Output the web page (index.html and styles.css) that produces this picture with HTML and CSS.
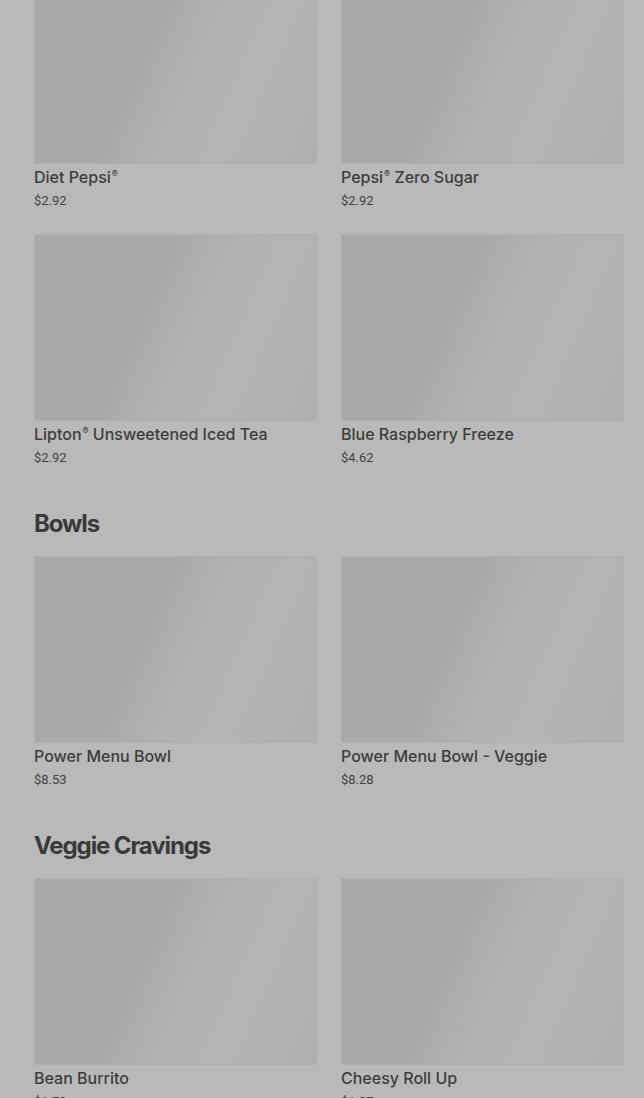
FILE: index.html
```html
<!DOCTYPE html>
<html lang="en">
<head>
    <meta charset="UTF-8">
    <meta name="viewport" content="width=device-width, initial-scale=1.0">
    <title>Menu</title>
    <link rel="stylesheet" href="styles.css">
</head>
<body>

    <div class="menu-container">
        <!-- Drinks -->
        <div class="menu-section first">
            <div class="item-grid">
                <div class="item-card">
                    <div class="item-image"></div>
                    <div class="item-name">Diet Pepsi<sup>®</sup></div>
                    <div class="item-price">$2.92</div>
                </div>
                <div class="item-card">
                    <div class="item-image"></div>
                    <div class="item-name">Pepsi<sup>®</sup> Zero Sugar</div>
                    <div class="item-price">$2.92</div>
                </div>
                <div class="item-card">
                    <div class="item-image"></div>
                    <div class="item-name">Lipton<sup>®</sup> Unsweetened Iced Tea</div>
                    <div class="item-price">$2.92</div>
                </div>
                <div class="item-card">
                    <div class="item-image"></div>
                    <div class="item-name">Blue Raspberry Freeze</div>
                    <div class="item-price">$4.62</div>
                </div>
            </div>
        </div>

        <!-- Bowls -->
        <div class="menu-section">
            <h2 class="section-title">Bowls</h2>
            <div class="item-grid">
                <div class="item-card">
                    <div class="item-image"></div>
                    <div class="item-name">Power Menu Bowl</div>
                    <div class="item-price">$8.53</div>
                </div>
                <div class="item-card">
                    <div class="item-image"></div>
                    <div class="item-name">Power Menu Bowl - Veggie</div>
                    <div class="item-price">$8.28</div>
                </div>
            </div>
        </div>

        <!-- Veggie Cravings -->
        <div class="menu-section">
            <h2 class="section-title">Veggie Cravings</h2>
            <div class="item-grid">
                <div class="item-card">
                    <div class="item-image"></div>
                    <div class="item-name">Bean Burrito</div>
                    <div class="item-price">$1.79</div>
                </div>
                <div class="item-card">
                    <div class="item-image"></div>
                    <div class="item-name">Cheesy Roll Up</div>
                    <div class="item-price">$1.37</div>
                </div>
            </div>
        </div>
    </div>

</body>
</html>
```

FILE: styles.css
```css
/* General Styling */
body {
    margin: 0;
    font-family: Roboto, 'Liberation Sans', sans-serif;
    background: #b9b9b9;
    color: #3b3b3b;
    overflow: hidden;
}

.menu-container {
    padding: 0 20px 40px 34px;
}

/* Sections */
.menu-section {
    margin-top: 42px;
}

.menu-section.first {
    margin-top: -23px;
}

.section-title {
    margin: 0 0 16px;
    font-family: Inter, 'Liberation Sans', sans-serif;
    font-size: 24px;
    line-height: 32px;
    font-weight: 700;
    letter-spacing: -1.1px;
    color: #393939;
}

/* Item cards */
.item-grid {
    display: grid;
    grid-template-columns: 1fr 1fr;
    column-gap: 24px;
    row-gap: 25px;
}

.item-image {
    height: 187px;
    background: linear-gradient(114deg, #a9a9a9 0%, #a9a9a9 40%, #b1b1b1 55%, #b4b4b4 72%, #afafaf 100%);
    box-shadow: inset 0 0 0 1px #b0b0b0;
}

.item-name {
    margin-top: 3px;
    font-family: Inter, Roboto, sans-serif;
    font-size: 16px;
    line-height: 20px;
    font-weight: 500;
    color: #3d3d3d;
}

.item-name sup {
    font-size: 9px;
    line-height: 0;
    vertical-align: 6px;
    margin-left: 1px;
}

.item-price {
    margin-top: 6px;
    font-size: 13px;
    line-height: 16px;
    color: #424242;
}
```
